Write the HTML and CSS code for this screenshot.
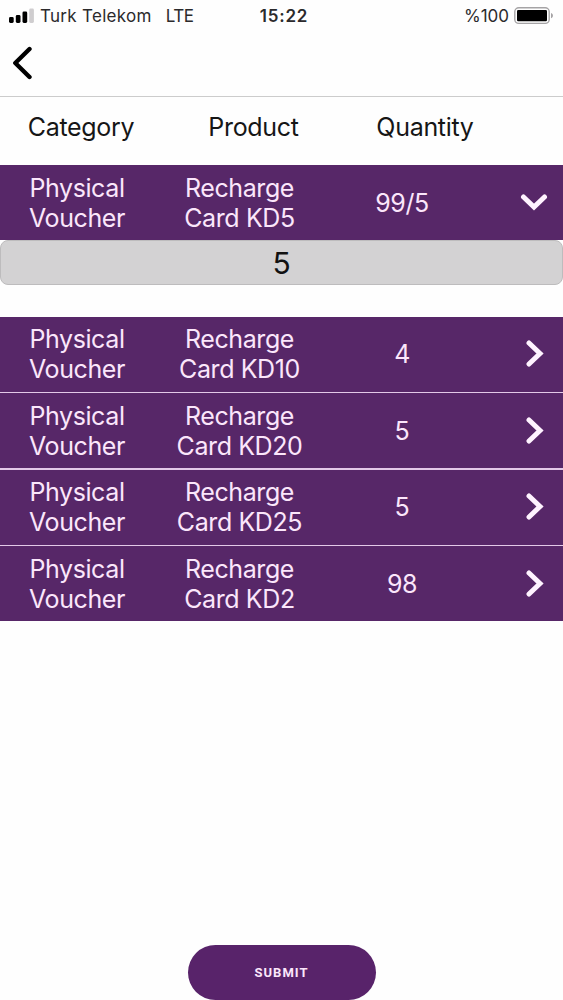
FILE: index.html
```html
<!DOCTYPE html>
<html lang="en">
<head>
    <meta charset="UTF-8">
    <meta name="viewport" content="width=device-width, initial-scale=1.0">
    <title>Vouchers</title>
    <link rel="stylesheet" href="styles.css">
</head>
<body>
    <div class="status-bar">
        <div class="carrier">
            <svg class="signal" width="25" height="16" viewBox="0 0 25 16">
                <rect x="0" y="9" width="4.7" height="6" rx="1.4"/>
                <rect x="6.8" y="7" width="4.7" height="8" rx="1.4"/>
                <rect x="13.5" y="3.500" width="4.7" height="11.5" rx="1.4"/>
                <rect class="signal-off" x="20.2" y="0.500" width="4.7" height="14.5" rx="1.4"/>
            </svg>
            <span>Turk Telekom</span>
            <span class="network">LTE</span>
        </div>
        <div class="clock">15:22</div>
        <div class="battery">
            <span>%100</span>
            <svg width="40" height="18" viewBox="0 0 40 18">
                <rect class="battery-case" x="0.8" y="0.8" width="34.4" height="15.6" rx="4"/>
                <rect x="3" y="3" width="30" height="11.2" rx="1.2"/>
                <path class="battery-tip" d="M37 6c2.6.8 2.6 4.400 0 5.200z"/>
            </svg>
        </div>
    </div>

    <div class="nav-bar">
        <svg width="21" height="34" viewBox="0 0 21 34">
            <path class="back" d="M17.500 3L3.300 17L17.500 31"/>
        </svg>
    </div>

    <div class="table-head">
        <span>Category</span>
        <span>Product</span>
        <span>Quantity</span>
    </div>

    <div class="row">
        <span>Physical<br>Voucher</span>
        <span>Recharge<br>Card KD5</span>
        <span>99/5</span>
        <svg class="arrow" width="28" height="28" viewBox="0 0 28 28"><path d="M3.500 8L14 18L24.500 8"/></svg>
    </div>
    <input class="quantity" type="text" value="5">

    <div class="list">
        <div class="row">
            <span>Physical<br>Voucher</span>
            <span>Recharge<br>Card KD10</span>
            <span>4</span>
            <svg class="arrow" width="28" height="28" viewBox="0 0 28 28"><path d="M9 3L20 13.500L9 24"/></svg>
        </div>
        <div class="row">
            <span>Physical<br>Voucher</span>
            <span>Recharge<br>Card KD20</span>
            <span>5</span>
            <svg class="arrow" width="28" height="28" viewBox="0 0 28 28"><path d="M9 3L20 13.500L9 24"/></svg>
        </div>
        <div class="row">
            <span>Physical<br>Voucher</span>
            <span>Recharge<br>Card KD25</span>
            <span>5</span>
            <svg class="arrow" width="28" height="28" viewBox="0 0 28 28"><path d="M9 3L20 13.500L9 24"/></svg>
        </div>
        <div class="row">
            <span>Physical<br>Voucher</span>
            <span>Recharge<br>Card KD2</span>
            <span>98</span>
            <svg class="arrow" width="28" height="28" viewBox="0 0 28 28"><path d="M9 3L20 13.500L9 24"/></svg>
        </div>
    </div>

    <div class="actions">
        <button class="submit">SUBMIT</button>
    </div>
</body>
</html>
```
FILE: styles.css
```css
* {
    box-sizing: border-box;
}
body {
    margin: 0;
    height: 1000px;
    display: flex;
    flex-direction: column;
    overflow: hidden;
    font-family: Inter, Roboto, sans-serif;
    background-color: #fefefe;
    color: #161616;
}
.status-bar {
    display: grid;
    grid-template-columns: 1fr auto 1fr;
    align-items: center;
    height: 32px;
    padding: 0 9px;
    font-size: 17px;
    color: #2b2a2c;
}
.carrier,
.battery {
    display: flex;
    align-items: center;
}
.carrier {
    letter-spacing: 0.3px;
}
.signal {
    margin-right: 6px;
}
.signal-off {
    fill: #cfcdcf;
}
.network {
    margin-left: 14px;
    letter-spacing: -0.5px;
}
.clock {
    font-weight: 600;
    letter-spacing: 0.8px;
    padding-left: 5px;
}
.battery {
    justify-content: flex-end;
    gap: 5px;
}
.battery-case {
    fill: none;
    stroke: #a5a3a5;
    stroke-width: 1.4;
}
.battery-tip {
    fill: #a5a3a5;
}
.nav-bar {
    display: flex;
    align-items: center;
    height: 65px;
    padding: 0 0 2px 12px;
    border-bottom: 1px solid #cccccc;
}
.back {
    fill: none;
    stroke: #000;
    stroke-width: 4.4;
    stroke-linecap: round;
    stroke-linejoin: round;
}
.table-head {
    display: grid;
    grid-template-columns: 162px 183px 160px;
    align-items: center;
    height: 68px;
    padding-bottom: 9px;
    font-size: 25px;
    letter-spacing: -0.3px;
    text-align: center;
}
.row {
    display: grid;
    grid-template-columns: 154px 171px 154px 1fr;
    align-items: center;
    height: 75px;
    font-size: 25px;
    line-height: 30px;
    letter-spacing: -0.4px;
    text-align: center;
    color: #fbe6fb;
    background-color: #572768;
}
.arrow {
    margin-left: 41px;
    fill: none;
    stroke: #fff3ff;
    stroke-width: 5;
    stroke-linecap: round;
}
.quantity {
    width: 100%;
    height: 45px;
    padding: 0;
    font-family: inherit;
    font-size: 30px;
    text-align: center;
    color: #111;
    background-color: #d3d2d3;
    border: 1px solid #bdbcbd;
    border-radius: 8px;
}
.list {
    display: flex;
    flex-direction: column;
    gap: 1.5px;
    margin-top: 31.5px;
    background-color: #e3c9e8;
}
.actions {
    margin-top: auto;
    text-align: center;
}
.submit {
    display: block;
    width: 188px;
    height: 55px;
    margin: 0 auto;
    font-family: Roboto, sans-serif;
    font-size: 13px;
    font-weight: 700;
    letter-spacing: 1px;
    color: #fbe6fb;
    background-color: #58236a;
    border: none;
    border-radius: 28px;
}
```
